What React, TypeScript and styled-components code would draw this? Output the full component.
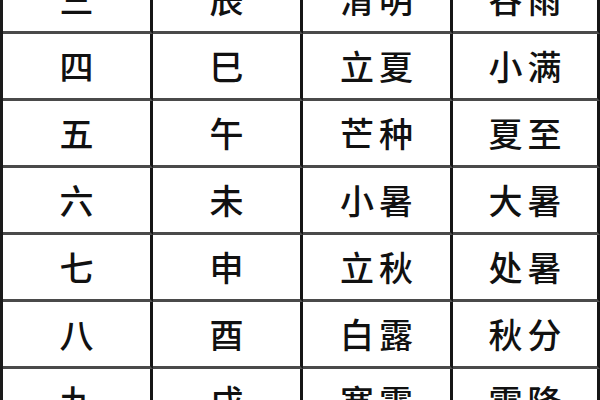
import React from 'react';
import styled, { createGlobalStyle } from 'styled-components';

const GlobalStyle = createGlobalStyle`
  html, body {
    margin: 0;
    padding: 0;
    background: #fff;
  }
`;

const Viewport = styled.div`
  width: 600px;
  height: 400px;
  overflow: hidden;
  background: #fff;
`;

const Table = styled.div`
  margin-top: -33px;
  display: grid;
  grid-template-columns: 150px 150px 150px 147px;
  grid-auto-rows: 67px;
  border-left: 3px solid #1a1a1a;
  width: 597px;
  box-sizing: border-box;
  font-family: "Noto Sans CJK SC", "Noto Sans CJK TC", sans-serif;
`;

const Cell = styled.div`
  box-sizing: border-box;
  display: flex;
  align-items: center;
  justify-content: center;
  border-right: 3px solid #151515;
  border-bottom: 3px solid #4a4a4a;
  font-size: 34px;
  font-weight: 500;
  color: #111;
  letter-spacing: 5px;
  text-indent: 5px;
  padding-bottom: 2px;
`;

const rows = [
  ['三', '辰', '清明', '谷雨'],
  ['四', '巳', '立夏', '小满'],
  ['五', '午', '芒种', '夏至'],
  ['六', '未', '小暑', '大暑'],
  ['七', '申', '立秋', '处暑'],
  ['八', '酉', '白露', '秋分'],
  ['九', '戌', '寒露', '霜降'],
];

export default function App() {
  return (
    <Viewport>
      <GlobalStyle />
      <Table>
        {rows.map((row, i) =>
          row.map((text, j) => <Cell key={`${i}-${j}`}>{text}</Cell>)
        )}
      </Table>
    </Viewport>
  );
}
